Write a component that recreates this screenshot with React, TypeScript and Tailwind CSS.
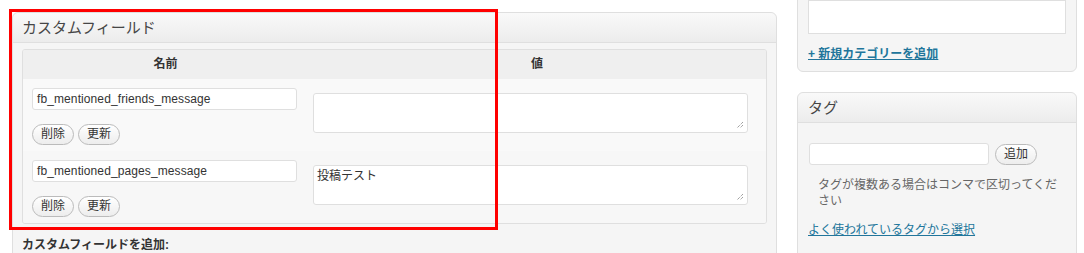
import React from "react";

const FONT = '"Liberation Sans", "Noto Sans CJK JP", sans-serif';

function Btn({ children }: { children: React.ReactNode }) {
  return (
    <button
      className="h-[21px] px-[8px] rounded-full border border-[#bbbbbb] bg-gradient-to-b from-[#ffffff] to-[#ededed] text-[12px] leading-[19px] text-[#333333]"
      style={{ fontFamily: FONT }}
    >
      {children}
    </button>
  );
}

function Grip() {
  return (
    <svg className="absolute right-[3px] bottom-[3px]" width="8" height="8" viewBox="0 0 8 8">
      <path d="M7 1 L1 7 M7 4 L4 7" stroke="#777" strokeWidth="1" strokeDasharray="1 1" />
    </svg>
  );
}

function Row({ name, value, bg }: { name: string; value: string; bg: string }) {
  return (
    <div className={`flex h-[72px] ${bg}`}>
      <div className="w-[283px] pl-[9px] pt-[9px] flex flex-col">
        <div className="w-[265px] h-[22px] border border-[#dfdfdf] rounded-[3px] bg-white px-[4px] text-[12px] leading-[20px] text-[#333] tracking-[0.1px]">
          {name}
        </div>
        <div className="flex gap-[4px] mt-[14px]">
          <Btn>削除</Btn>
          <Btn>更新</Btn>
        </div>
      </div>
      <div className="pl-[7px] pt-[14px]">
        <div className="relative w-[435px] h-[40px] border border-[#dfdfdf] rounded-[3px] bg-white px-[3px] pt-[2px] text-[12px] leading-[16px] text-[#333]">
          {value}
          <Grip />
        </div>
      </div>
    </div>
  );
}

export default function App() {
  return (
    <div className="relative w-[1084px] h-[253px] overflow-hidden bg-white" style={{ fontFamily: FONT }}>
      <div className="flex pl-[12px]">
        {/* main column */}
        <div className="w-[765px] pt-[12px]">
          <div className="border border-[#dfdfdf] rounded-t-[6px] bg-[#f5f5f5] h-[260px]">
            <div className="h-[30px] rounded-t-[6px] bg-gradient-to-b from-[#f9f9f9] to-[#ececec] border-b border-[#dfdfdf] pl-[9px] text-[15px] leading-[29px] text-[#464646]">
              カスタムフィールド
            </div>
            <div className="px-[9px] pt-[6px]">
              <div className="border border-[#dfdfdf] rounded-[3px] overflow-hidden">
                <div className="flex h-[29px] bg-[#efefef] text-[12px] font-bold text-[#333] leading-[28px]">
                  <div className="w-[285px] text-center">名前</div>
                  <div className="flex-1 text-center">値</div>
                </div>
                <Row name="fb_mentioned_friends_message" value="" bg="bg-[#f9f9f9]" />
                <Row name="fb_mentioned_pages_message" value="投稿テスト" bg="bg-[#f7f7f7]" />
              </div>
              <div className="pt-[12px] text-[12px] font-bold text-[#333]">カスタムフィールドを追加:</div>
            </div>
          </div>
        </div>
        {/* sidebar */}
        <div className="ml-[20px] w-[280px] -mt-[10px]">
          <div className="border border-[#dfdfdf] rounded-[6px] bg-[#f5f5f5] h-[82px] px-[10px]">
            <div className="h-[34px] mt-[9px] border border-[#dfdfdf] bg-white"></div>
            <a className="block mt-[12px] text-[12px] font-bold text-[#21759b] underline leading-[16px]">+ 新規カテゴリーを追加</a>
          </div>
          <div className="mt-[20px] border border-[#dfdfdf] rounded-t-[6px] bg-[#f5f5f5] h-[200px]">
            <div className="h-[30px] rounded-t-[6px] bg-gradient-to-b from-[#f9f9f9] to-[#ececec] border-b border-[#dfdfdf] pl-[10px] text-[15px] leading-[29px] text-[#464646]">
              タグ
            </div>
            <div className="px-[11px] pt-[20px]">
              <div className="flex items-center gap-[6px]">
                <div className="w-[180px] h-[22px] border border-[#dfdfdf] rounded-[3px] bg-white"></div>
                <Btn>追加</Btn>
              </div>
              <p className="w-[246px] ml-[9px] mt-[12px] text-[12px] leading-[16px] text-[#666]">
                タグが複数ある場合はコンマで区切ってください
              </p>
              <a className="block -ml-[1px] mt-[13px] text-[12px] text-[#21759b] underline leading-[16px]">よく使われているタグから選択</a>
            </div>
          </div>
        </div>
      </div>
      {/* red annotation */}
      <div className="absolute left-[9px] top-[9px] w-[489px] h-[221px] border-[3px] border-[#ff0000] pointer-events-none"></div>
    </div>
  );
}
